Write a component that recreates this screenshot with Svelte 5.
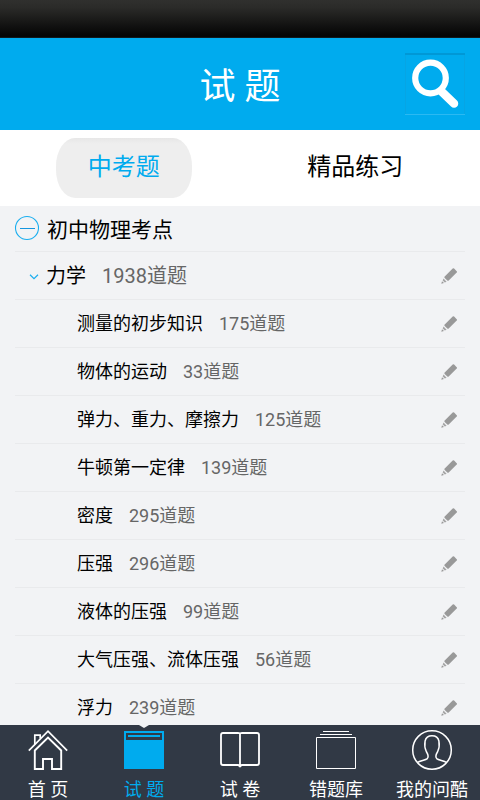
<script>
  const topics = [
    { name: '测量的初步知识', count: 175 },
    { name: '物体的运动', count: 33 },
    { name: '弹力、重力、摩擦力', count: 125 },
    { name: '牛顿第一定律', count: 139 },
    { name: '密度', count: 295 },
    { name: '压强', count: 296 },
    { name: '液体的压强', count: 99 },
    { name: '大气压强、流体压强', count: 56 },
    { name: '浮力', count: 239 }
  ];
  const nav = [
    { id: 'home', label: '首 页' },
    { id: 'questions', label: '试 题' },
    { id: 'papers', label: '试 卷' },
    { id: 'mistakes', label: '错题库' },
    { id: 'profile', label: '我的问酷' }
  ];
  const active = 'questions';
</script>

{#snippet pencil()}
  <svg class="pencil" width="16" height="16" viewBox="0 0 16 16" aria-hidden="true">
    <path d="M4.4 9.2L12.4 1.3L15 3.9L7 11.8Z" fill="#999" stroke="#999" stroke-width="2" stroke-linejoin="round" />
    <path d="M2.5 10.6L5.6 13.7L3.8 14.5L1.7 12.6Z" fill="#a5a5a5" />
    <path d="M1 13.2L3 15L.3 15.8Z" fill="#999" />
  </svg>
{/snippet}

<div class="app">
  <div class="status"></div>
  <header>
    <span></span>
    <h1>试 题</h1>
    <button class="search" aria-label="搜索">
      <svg width="60" height="62" viewBox="0 0 60 62">
        <path d="M36 38L49 50.5" stroke="#fff" stroke-width="8.5" stroke-linecap="round" />
        <circle cx="25.5" cy="25" r="15.3" fill="#00abee" stroke="#fff" stroke-width="6.2" />
      </svg>
    </button>
  </header>

  <div class="tabs">
    <div class="tab"><span class="pill">中考题</span></div>
    <div class="tab second"><span>精品练习</span></div>
  </div>

  <main>
    <div class="group">
      <svg width="26" height="26" viewBox="0 0 26 26">
        <circle cx="13" cy="13" r="11.5" fill="none" stroke="#1aaeef" stroke-width="1.1" />
        <path d="M6 13.5H21" stroke="#1596df" />
      </svg>
      <span>初中物理考点</span>
    </div>
    <div class="row chapter">
      <svg class="chevron" width="10" height="6" viewBox="0 0 10 6">
        <path d="M1 .8L5 4.6L9 .8" fill="none" stroke="#1aaeef" stroke-width="1.2" />
      </svg>
      <span>力学</span><span class="count">1938道题</span>
      {@render pencil()}
    </div>
    {#each topics as t}
      <div class="row topic">
        <span>{t.name}</span><span class="count">{t.count}道题</span>
        {@render pencil()}
      </div>
    {/each}
  </main>

  <nav>
    {#each nav as item}
      <div class="item" class:active={item.id === active}>
        <svg width="44" height="46" viewBox="0 0 44 46" fill="none" stroke="#fff">
          {#if item.id === 'home'}
            <path d="M2.8 25.6L22 6.2L41.2 25.6" stroke-width="1.7" />
            <path d="M8.8 19.5V10.2H14.2V13.5" stroke-width="1.7" />
            <path d="M8.8 25.5L22 12.5L35.2 25.5V44H26V34H17V44H8.8Z" stroke-width="1.9" />
          {:else if item.id === 'questions'}
            <path d="M2 6H42V44H2Z" fill="#00abee" stroke="none" />
            <path d="M4 8H40V15H4Z" fill="#313945" stroke="none" />
            <path d="M6 10H38V12H6Z" fill="#00abee" stroke="none" />
          {:else if item.id === 'papers'}
            <path d="M22 9Q22 8 20 8H5Q3 8 3 10V38Q3 40 5 40H20Q22 40 22 42Q22 40 24 40H39Q41 40 41 38V10Q41 8 39 8H24Q22 8 22 9V42" stroke-width="1.8" />
            <path d="M20 40.8L22 38.8L24 40.8L22 42.8Z" fill="#fff" stroke="none" />
          {:else if item.id === 'mistakes'}
            <path d="M9 6.5H35M6 9.5H38M2.5 12.5H41.5V43.5H2.5Z" />
          {:else}
            <circle cx="22" cy="25" r="19.3" stroke-width="1.5" />
            <path d="M7.5 37.5C10 35.7 15.5 35.2 17.3 33.6C19 31.8 17.8 29 16.3 26.5C15.1 24 14.5 19.5 15.1 16C15.8 12.4 18.3 10.7 22 10.7S28.2 12.4 28.9 16C29.5 19.5 28.9 24 27.7 26.5C26.2 29 25 31.8 26.7 33.6C28.5 35.2 34 35.7 36.5 37.5" stroke-width="1.5" />
          {/if}
        </svg>
        <span>{item.label}</span>
      </div>
    {/each}
  </nav>
</div>

<style>
  :global(body) { margin: 0; }
  .app {
    width: 480px;
    height: 800px;
    display: flex;
    flex-direction: column;
    overflow: hidden;
    background: #f2f3f5;
    color: #000;
    font-family: Roboto, "Noto Sans CJK SC", sans-serif;
  }
  .status {
    flex: 0 0 37px;
    background: linear-gradient(#30302e 0, #2b2b29 20%, #050505 95%);
    border-bottom: 1px solid #10191d;
  }
  header {
    flex: 0 0 92px;
    display: grid;
    grid-template-columns: 1fr auto 1fr;
    align-items: center;
    background: #00abee;
  }
  h1 {
    margin: 0;
    padding-top: 6px;
    color: #fff;
    font-size: 36px;
    line-height: 48px;
    font-weight: 400;
  }
  .search {
    justify-self: end;
    box-sizing: border-box;
    width: 60px;
    height: 62px;
    margin: 0 15px 0 0;
    padding: 0;
    border: 0;
    background: #00abee;
    box-shadow: inset 0 2px #0098d6, inset 0 -1px #2bb9f2, inset 1px 0 #06a5e4, inset -1px 0 #06a5e4;
  }
  .search svg { display: block; }
  .tabs {
    flex: 0 0 76px;
    display: flex;
    background: #fff;
    font-size: 24px;
  }
  .tab {
    flex: 1 1 0;
    box-sizing: border-box;
    display: flex;
    justify-content: center;
    padding: 8px 0 0 8px;
    line-height: 58px;
  }
  .tab.second { padding: 8px 9px 0 0; }
  .pill {
    width: 136px;
    height: 60px;
    text-align: center;
    color: #00abee;
    background: linear-gradient(#e7e7e7, #eee 6px);
    border-radius: 19px / 28px;
  }
  main {
    flex: 1;
    min-height: 0;
    overflow: hidden;
    padding: 0 15px;
  }
  .group {
    display: flex;
    align-items: center;
    height: 45px;
    border-bottom: 1px solid #e9eaec;
    font-size: 21px;
  }
  .group svg { margin: 0 0 1px -1px; }
  .group span { margin: 0 0 2px 7px; }
  .row {
    display: flex;
    align-items: center;
    height: 47px;
    border-bottom: 1px solid #e9eaec;
    font-size: 18px;
    line-height: 26px;
    white-space: nowrap;
  }
  .chapter { padding-left: 14px; font-size: 20px; }
  .chevron { margin: 3px 7px 0 0; }
  .topic { padding-left: 62px; }
  .count { margin-left: 16px; color: #666; }
  .pencil { margin: 0 8px 0 auto; }
  nav {
    flex: 0 0 75px;
    min-height: 0;
    display: flex;
    background: #313945;
    color: #fff;
  }
  .item {
    position: relative;
    flex: 1 1 0;
    display: flex;
    flex-direction: column;
    align-items: center;
    font-size: 18px;
    line-height: 22px;
    white-space: nowrap;
  }
  .item svg { flex: none; }
  .item span { margin-top: 8px; }
  .active { color: #00abee; }
  .active::before {
    content: '';
    position: absolute;
    top: 0;
    left: 43px;
    border: 5px solid transparent;
    border-top: 3px solid #f2f3f5;
    border-bottom: 0;
  }
</style>
